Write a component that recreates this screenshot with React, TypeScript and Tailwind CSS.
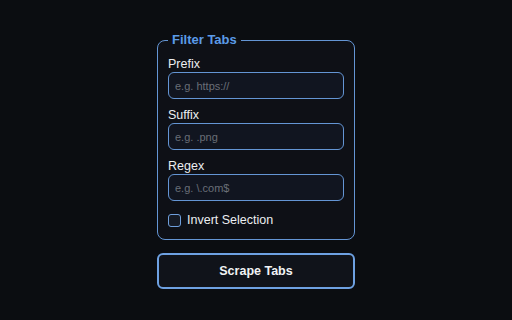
export default function App() {
  const fields = [
    { label: 'Prefix', placeholder: 'e.g. https://' },
    { label: 'Suffix', placeholder: 'e.g. .png' },
    { label: 'Regex', placeholder: 'e.g. \\.com$' },
  ];

  return (
    <div
      className="flex h-[320px] w-[512px] flex-col items-center bg-[#0b0d11] pt-[32px] text-[#eceef1]"
      style={{ fontFamily: '"Liberation Sans", Arial, sans-serif' }}
    >
      <fieldset className="m-0 w-[198px] rounded-lg border border-[#6495d4] bg-[#0e1016] px-[10px] pb-[11px] pt-0">
        <legend className="px-[4px] text-[13px] font-bold leading-[16px] text-[#5b9be8]">
          Filter Tabs
        </legend>
        <div className="mt-[8px] flex flex-col gap-[8px]">
          {fields.map((f) => (
            <label key={f.label} className="flex flex-col">
              <span className="text-[12.5px] leading-[16px]">{f.label}</span>
              <input
                type="text"
                placeholder={f.placeholder}
                className="h-[27px] w-full rounded-md border border-[#6495d4] bg-[#111520] px-[6px] text-[11px] text-[#e8eaed] outline-none placeholder:text-[#696e77]"
              />
            </label>
          ))}
        </div>
        <label className="mt-[11px] flex h-[16px] items-center gap-[6px] text-[12.5px] leading-[16px]">
          <span className="h-[13px] w-[13px] rounded-[3px] border border-[#6f9fdc] bg-[#151a24]" />
          Invert Selection
        </label>
      </fieldset>
      <button
        type="button"
        className="mt-[13px] h-[36px] w-[198px] rounded-md border-2 border-[#6ea1e2] bg-[#10131a] text-[12.5px] font-bold text-[#f1f3f5]"
      >
        Scrape Tabs
      </button>
    </div>
  );
}
